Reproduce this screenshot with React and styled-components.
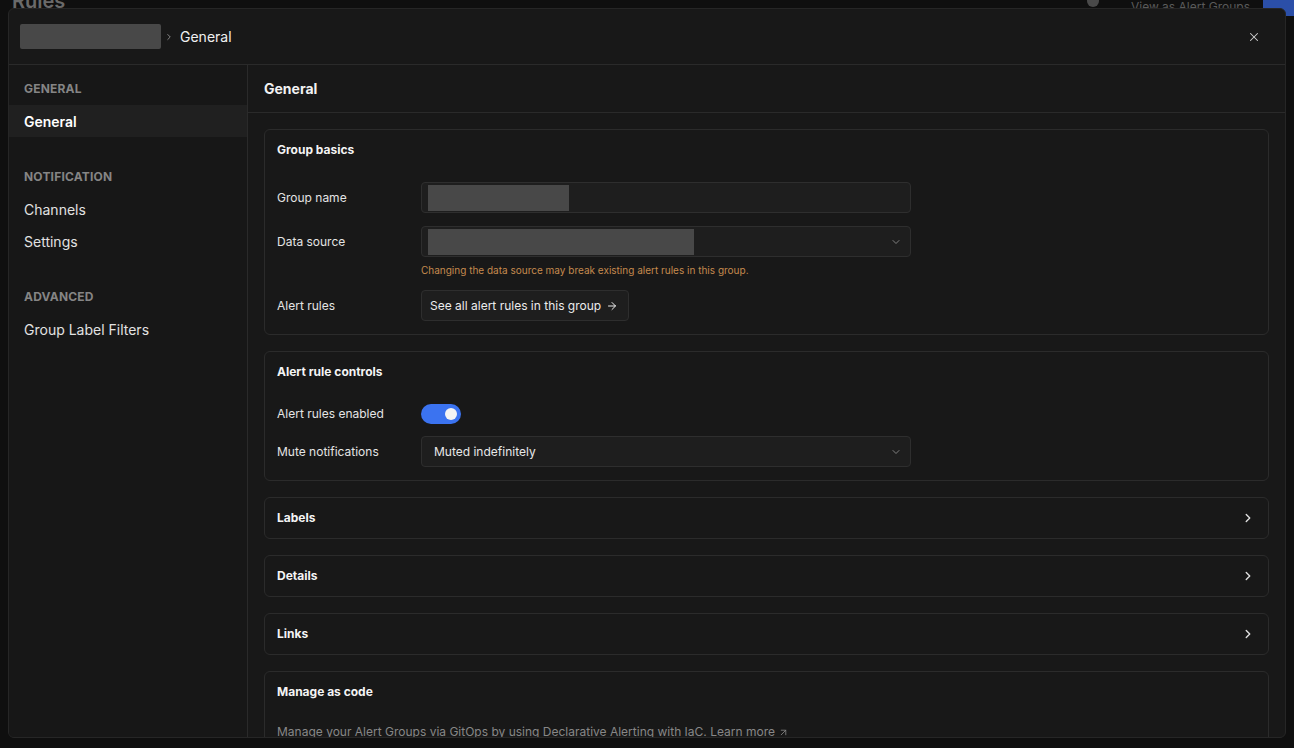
import React from "react";
import styled, { createGlobalStyle } from "styled-components";
import { ChevronRight, ChevronDown, X, ArrowRight, ArrowUpRight } from "lucide-react";

const GlobalStyle = createGlobalStyle`
  html, body {
    margin: 0;
    padding: 0;
    background: #0e0e0e;
    font-family: Inter, "Noto Sans", "Liberation Sans", sans-serif;
    color: #e6e6e6;
    overflow: hidden;
  }
  * { box-sizing: border-box; }
`;

// page behind the drawer (dimmed)
const Backdrop = styled.div`
  width: 1294px;
  height: 748px;
  background: #0f0f0f;
  color: #5c5c5c;
  position: relative;
  overflow: hidden;
`;
const BackTop = styled.div`
  display: flex;
  align-items: center;
  justify-content: space-between;
  height: 20px;
  margin-top: -9px;
  padding-left: 12px;
`;
const BackTitle = styled.div`
  font-size: 20px;
  font-weight: 600;
  color: #6a6a6a;
`;
const BackActions = styled.div`
  display: flex;
  align-items: center;
`;
const BackDot = styled.div`
  width: 12px;
  height: 12px;
  border-radius: 50%;
  background: #4a4a4a;
  margin-right: 32px;
`;
const BackLink = styled.div`
  font-size: 12px;
  color: #5a5a5a;
  padding-top: 10px;
  margin-right: 13px;
`;
const BackButton = styled.div`
  background: #2b4fa8;
  color: #b8c6ea;
  font-size: 13px;
  padding: 10px 8px 0;
  height: 20px;
  width: 31px;
  margin-top: 10px;
`;

const Overlay = styled.div`
  position: absolute;
  inset: 0;
  padding: 8px;
  display: flex;
`;
const Drawer = styled.div`
  width: 1278px;
  height: 730px;
  background: #181818;
  border: 1px solid #262626;
  border-radius: 6px;
  display: flex;
  flex-direction: column;
  overflow: hidden;
`;
const Header = styled.div`
  height: 56px;
  flex-shrink: 0;
  display: flex;
  align-items: center;
  padding: 0 24px 0 11px;
  border-bottom: 1px solid #2a2a2a;
`;
const Crumbs = styled.div`
  display: flex;
  align-items: center;
  flex: 1;
  font-size: 14px;
  color: #f0f0f0;
`;
const CrumbSep = styled.div`
  display: flex;
  color: #9a9a9a;
  margin: 0 6px 0 3px;
`;
const Redacted = styled.div`
  width: ${(p) => p.w}px;
  height: ${(p) => p.h}px;
  background: #484848;
  border-radius: ${(p) => (p.round ? 2 : 0)}px;
`;
const CloseBtn = styled.div`
  display: flex;
  color: #cfcfcf;
`;

const Body = styled.div`
  flex: 1;
  display: flex;
  min-height: 0;
`;
const Sidebar = styled.nav`
  width: 239px;
  flex-shrink: 0;
  background: #171717;
  border-right: 1px solid #2a2a2a;
  padding-top: 16px;
  display: flex;
  flex-direction: column;
  gap: 32px;
`;
const NavSection = styled.div`
  display: flex;
  flex-direction: column;
`;
const NavLabel = styled.div`
  font-size: 12px;
  font-weight: 700;
  color: #858585;
  letter-spacing: 0.2px;
  line-height: 16px;
  padding: 0 15px;
  margin-bottom: 8px;
`;
const NavItem = styled.div`
  height: 32px;
  display: flex;
  align-items: center;
  padding: 0 15px;
  font-size: 14px;
  color: ${(p) => (p.active ? "#ffffff" : "#e2e2e2")};
  font-weight: ${(p) => (p.active ? 600 : 400)};
  background: ${(p) => (p.active ? "#202020" : "transparent")};
`;

const Main = styled.div`
  flex: 1;
  display: flex;
  flex-direction: column;
  min-width: 0;
`;
const MainHeader = styled.div`
  height: 48px;
  flex-shrink: 0;
  display: flex;
  align-items: center;
  padding: 0 16px;
  font-size: 14px;
  font-weight: 700;
  color: #f2f2f2;
  border-bottom: 1px solid #2a2a2a;
`;
const Scroll = styled.div`
  flex: 1;
  overflow: hidden;
  padding: 16px 16px 0 16px;
  display: flex;
  flex-direction: column;
  gap: 16px;
`;
const Card = styled.section`
  border: 1px solid #2b2b2b;
  border-radius: 6px;
  background: #181818;
  padding: 12px 12px ${(p) => (p.fields ? 13 : 12)}px 12px;
  flex-shrink: 0;
`;
const CardTitleRow = styled.div`
  display: flex;
  align-items: center;
  justify-content: space-between;
  height: 16px;
`;
const CardTitle = styled.h3`
  margin: 0;
  font-size: 12px;
  font-weight: 700;
  color: #f4f4f4;
  line-height: 16px;
`;
const ChevronWrap = styled.div`
  display: flex;
  color: #e0e0e0;
  margin-right: 1px;
`;
const Fields = styled.div`
  margin-top: 24px;
  display: flex;
  flex-direction: column;
  gap: ${(p) => p.gap || 13}px;
`;
const Row = styled.div`
  display: grid;
  grid-template-columns: 144px 490px;
  align-items: ${(p) => (p.top ? "start" : "center")};
`;
const Label = styled.div`
  font-size: 12px;
  color: #e4e4e4;
  line-height: ${(p) => (p.top ? "31px" : "16px")};
`;
const FieldCol = styled.div`
  display: flex;
  flex-direction: column;
`;
const Input = styled.div`
  height: 31px;
  background: #1e1e1e;
  border: 1px solid #2e2e2e;
  border-radius: 4px;
  display: flex;
  align-items: center;
  padding: 0 6px;
  font-size: 12px;
  color: #e8e8e8;
  gap: 6px;
`;
const SelectValue = styled.div`
  flex: 1;
  display: flex;
  align-items: center;
  padding-left: ${(p) => p.pad || 0}px;
`;
const SelectArrow = styled.div`
  display: flex;
  color: #8a8a8a;
  margin-right: 2px;
`;
const Helper = styled.div`
  margin-top: 7px;
  font-size: 10px;
  line-height: 13px;
  color: #c58a4e;
`;
const LinkButton = styled.div`
  justify-self: start;
  height: 31px;
  display: inline-flex;
  align-items: center;
  gap: 5px;
  padding: 0 10px 0 8px;
  background: #1e1e1e;
  border: 1px solid #2e2e2e;
  border-radius: 4px;
  font-size: 12px;
  color: #ececec;
`;
const Toggle = styled.div`
  width: 40px;
  height: 20px;
  border-radius: 10px;
  background: #3b73f0;
  display: flex;
  align-items: center;
  justify-content: ${(p) => (p.on ? "flex-end" : "flex-start")};
  padding: 0 4px;
`;
const Knob = styled.div`
  width: 12px;
  height: 12px;
  border-radius: 50%;
  background: #f4f4f4;
`;
const Muted = styled.p`
  margin: 24px 0 0;
  font-size: 12px;
  line-height: 16px;
  color: #878787;
  display: flex;
  align-items: center;
  gap: 3px;
`;

function CollapsedCard({ title }) {
  return (
    <Card>
      <CardTitleRow>
        <CardTitle>{title}</CardTitle>
        <ChevronWrap>
          <ChevronRight size={14} strokeWidth={2.4} />
        </ChevronWrap>
      </CardTitleRow>
    </Card>
  );
}

export default function App() {
  return (
    <>
      <GlobalStyle />
      <Backdrop>
        <BackTop>
          <BackTitle>Rules</BackTitle>
          <BackActions>
            <BackDot />
            <BackLink>View as Alert Groups</BackLink>
            <BackButton>+ C</BackButton>
          </BackActions>
        </BackTop>
        <Overlay>
          <Drawer>
            <Header>
              <Crumbs>
                <Redacted w={141} h={25} round />
                <CrumbSep>
                  <ChevronRight size={10} strokeWidth={2} />
                </CrumbSep>
                <span>General</span>
              </Crumbs>
              <CloseBtn>
                <X size={14} strokeWidth={1.8} />
              </CloseBtn>
            </Header>
            <Body>
              <Sidebar>
                <NavSection>
                  <NavLabel>GENERAL</NavLabel>
                  <NavItem active>General</NavItem>
                </NavSection>
                <NavSection>
                  <NavLabel>NOTIFICATION</NavLabel>
                  <NavItem>Channels</NavItem>
                  <NavItem>Settings</NavItem>
                </NavSection>
                <NavSection>
                  <NavLabel>ADVANCED</NavLabel>
                  <NavItem>Group Label Filters</NavItem>
                </NavSection>
              </Sidebar>
              <Main>
                <MainHeader>General</MainHeader>
                <Scroll>
                  <Card fields>
                    <CardTitleRow>
                      <CardTitle>Group basics</CardTitle>
                    </CardTitleRow>
                    <Fields>
                      <Row>
                        <Label>Group name</Label>
                        <Input>
                          <Redacted w={141} h={26} />
                        </Input>
                      </Row>
                      <Row top>
                        <Label top>Data source</Label>
                        <FieldCol>
                          <Input>
                            <SelectValue>
                              <Redacted w={266} h={26} />
                            </SelectValue>
                            <SelectArrow>
                              <ChevronDown size={12} strokeWidth={1.8} />
                            </SelectArrow>
                          </Input>
                          <Helper>Changing the data source may break existing alert rules in this group.</Helper>
                        </FieldCol>
                      </Row>
                      <Row>
                        <Label>Alert rules</Label>
                        <LinkButton>
                          See all alert rules in this group
                          <ArrowRight size={12} strokeWidth={2} />
                        </LinkButton>
                      </Row>
                    </Fields>
                  </Card>

                  <Card fields>
                    <CardTitleRow>
                      <CardTitle>Alert rule controls</CardTitle>
                    </CardTitleRow>
                    <Fields gap={12}>
                      <Row>
                        <Label>Alert rules enabled</Label>
                        <Toggle on>
                          <Knob />
                        </Toggle>
                      </Row>
                      <Row>
                        <Label>Mute notifications</Label>
                        <Input>
                          <SelectValue pad={6}>Muted indefinitely</SelectValue>
                          <SelectArrow>
                            <ChevronDown size={12} strokeWidth={1.8} />
                          </SelectArrow>
                        </Input>
                      </Row>
                    </Fields>
                  </Card>

                  <CollapsedCard title="Labels" />
                  <CollapsedCard title="Details" />
                  <CollapsedCard title="Links" />

                  <Card>
                    <CardTitleRow>
                      <CardTitle>Manage as code</CardTitle>
                    </CardTitleRow>
                    <Muted>
                      Manage your Alert Groups via GitOps by using Declarative Alerting with IaC. Learn more
                      <ArrowUpRight size={11} strokeWidth={1.8} />
                    </Muted>
                  </Card>
                </Scroll>
              </Main>
            </Body>
          </Drawer>
        </Overlay>
      </Backdrop>
    </>
  );
}
